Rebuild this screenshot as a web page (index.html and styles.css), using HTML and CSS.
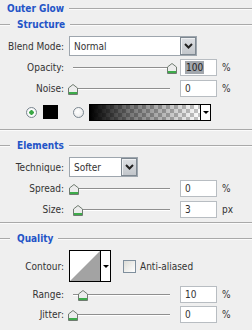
FILE: index.html
```html
<!DOCTYPE html>
<html>
<head>
<meta charset="utf-8">
<link rel="stylesheet" href="styles.css">
</head>
<body>
<div class="panel">
  <div class="title"><span class="hdr">Outer Glow</span><i class="rule"></i></div>

  <section class="group g-structure">
    <div class="legend"><i class="stub"></i><span class="hdr">Structure</span><i class="rule"></i></div>
    <div class="row r-first">
      <span class="lbl">Blend Mode:</span>
      <div class="select sel-blend"><span class="sel-text">Normal</span><span class="sel-btn"><svg width="9" height="6" viewBox="0 0 9 6"><path d="M1 1 L4.5 4.5 L8 1" fill="none" stroke="#222" stroke-width="2"/></svg></span></div>
    </div>
    <div class="row r-next">
      <span class="lbl">Opacity:</span>
      <div class="slider"><i class="track"></i><span class="thumb" style="left:99px"><svg width="10" height="11" viewBox="0 0 10 11"><path d="M0.5 4 L5 0.5 L9.5 4 V10.5 H0.5 Z" fill="#ececec" stroke="#6f7b70"/><rect x="1" y="8" width="8" height="2" fill="#3dab4a"/></svg></span></div>
      <span class="num"><span class="hl">100</span></span><span class="unit">%</span>
    </div>
    <div class="row r-next">
      <span class="lbl">Noise:</span>
      <div class="slider"><i class="track"></i><span class="thumb" style="left:0px"><svg width="10" height="11" viewBox="0 0 10 11"><path d="M0.5 4 L5 0.5 L9.5 4 V10.5 H0.5 Z" fill="#ececec" stroke="#6f7b70"/><rect x="1" y="8" width="8" height="2" fill="#3dab4a"/></svg></span></div>
      <span class="num">0</span><span class="unit">%</span>
    </div>
    <div class="row colors">
      <i class="radio on"></i>
      <i class="swatch"></i>
      <i class="radio"></i>
      <div class="grad"><span class="grad-fill"></span><span class="drop"><i class="tri"></i></span></div>
    </div>
  </section>

  <section class="group g-elements">
    <div class="legend"><i class="stub"></i><span class="hdr">Elements</span><i class="rule"></i></div>
    <div class="row r-first">
      <span class="lbl">Technique:</span>
      <div class="select sel-tech"><span class="sel-text">Softer</span><span class="sel-btn"><svg width="9" height="6" viewBox="0 0 9 6"><path d="M1 1 L4.5 4.5 L8 1" fill="none" stroke="#222" stroke-width="2"/></svg></span></div>
    </div>
    <div class="row r-next">
      <span class="lbl">Spread:</span>
      <div class="slider"><i class="track"></i><span class="thumb" style="left:1px"><svg width="10" height="11" viewBox="0 0 10 11"><path d="M0.5 4 L5 0.5 L9.5 4 V10.5 H0.5 Z" fill="#ececec" stroke="#6f7b70"/><rect x="1" y="8" width="8" height="2" fill="#3dab4a"/></svg></span></div>
      <span class="num">0</span><span class="unit">%</span>
    </div>
    <div class="row r-next">
      <span class="lbl">Size:</span>
      <div class="slider"><i class="track"></i><span class="thumb" style="left:5px"><svg width="10" height="11" viewBox="0 0 10 11"><path d="M0.5 4 L5 0.5 L9.5 4 V10.5 H0.5 Z" fill="#ececec" stroke="#6f7b70"/><rect x="1" y="8" width="8" height="2" fill="#3dab4a"/></svg></span></div>
      <span class="num">3</span><span class="unit">px</span>
    </div>
  </section>

  <section class="group g-quality">
    <div class="legend"><i class="stub"></i><span class="hdr">Quality</span><i class="rule"></i></div>
    <div class="row r-contour">
      <span class="lbl">Contour:</span>
      <div class="contour"><span class="curve"><svg width="30" height="30" viewBox="0 0 30 30"><polygon points="0,30 30,0 30,30" fill="#a3a3a3"/></svg></span><span class="drop"><i class="tri"></i></span></div>
      <i class="check"></i><span class="check-lbl">Anti-aliased</span>
    </div>
    <div class="row r-range">
      <span class="lbl">Range:</span>
      <div class="slider"><i class="track"></i><span class="thumb" style="left:10px"><svg width="10" height="11" viewBox="0 0 10 11"><path d="M0.5 4 L5 0.5 L9.5 4 V10.5 H0.5 Z" fill="#ececec" stroke="#6f7b70"/><rect x="1" y="8" width="8" height="2" fill="#3dab4a"/></svg></span></div>
      <span class="num">10</span><span class="unit">%</span>
    </div>
    <div class="row">
      <span class="lbl">Jitter:</span>
      <div class="slider"><i class="track"></i><span class="thumb" style="left:0px"><svg width="10" height="11" viewBox="0 0 10 11"><path d="M0.5 4 L5 0.5 L9.5 4 V10.5 H0.5 Z" fill="#ececec" stroke="#6f7b70"/><rect x="1" y="8" width="8" height="2" fill="#3dab4a"/></svg></span></div>
      <span class="num">0</span><span class="unit">%</span>
    </div>
  </section>
</div>
</body>
</html>
```

FILE: styles.css
```css
* { box-sizing: border-box; margin: 0; padding: 0; }
html, body { width: 252px; height: 330px; overflow: hidden; }
body {
  background: #efefef;
  font-family: "DejaVu Sans Condensed", "DejaVu Sans", sans-serif;
  font-stretch: condensed;
  font-size: 10px;
  color: #333;
}
i { display: block; font-style: normal; }

.title { display: flex; align-items: center; height: 17px; padding-left: 7px; gap: 5px; }
.hdr { font-weight: bold; color: #2354c7; white-space: nowrap; }
.rule { flex: 1; height: 1px; background: #a9a9a9; box-shadow: 0 1px #fbfbfb; }

.group { border-bottom: 1px solid #a9a9a9; box-shadow: 0 1px #fbfbfb; }
.g-structure { padding-bottom: 7px; }
.g-elements { margin-top: 8px; padding-bottom: 3px; }
.g-quality { margin-top: 8px; border-bottom: 0; box-shadow: none; }

.legend { display: flex; align-items: center; height: 14px; }
.stub { width: 10px; height: 1px; background: #a9a9a9; box-shadow: 0 1px #fbfbfb; margin-right: 7px; }
.legend .rule { margin-left: 5px; }

.row { display: flex; align-items: center; height: 20px; }
.r-first { margin-top: 5px; }
.r-next { margin-top: 1px; }
.lbl { width: 64px; text-align: right; white-space: nowrap; flex: none; }

.select {
  margin-left: 5px; height: 20px; display: flex; align-items: stretch;
  background: #fff; border: 1px solid #9ea6ae;
}
.sel-blend { width: 128px; }
.sel-tech { width: 69px; }
.sel-text { flex: 1; padding-left: 4px; display: flex; align-items: center; }
.sel-btn {
  width: 16px; display: flex; align-items: center; justify-content: center;
  background: linear-gradient(#dde0e4, #c2c6cb);
  border: 1px solid #7e8891; box-shadow: inset 1px 1px #eef0f2;
}

.slider { position: relative; width: 104px; height: 20px; flex: none; margin-left: 4px; }
.track { position: absolute; left: 5px; right: 2px; top: 10px; height: 1px; background: #8f8f8f; box-shadow: 0 1px #fff; }
.thumb { position: absolute; top: 6px; width: 10px; height: 11px; display: block; }
.thumb svg { display: block; }

.num {
  margin-left: 8px; width: 37px; height: 17px; background: #fff;
  border: 1px solid #b8bdc2; padding-left: 4px; display: flex; align-items: center; flex: none;
}
.hl { background: #a2a7ad; color: #222; padding: 1px 1px; }
.unit { margin-left: 5px; }

.colors { margin-top: 4px; padding-left: 26px; }
.radio {
  width: 11px; height: 11px; border-radius: 50%; border: 1px solid #7a8690;
  background: radial-gradient(circle at 40% 40%, #fff 0, #f2f2f2 50%, #d6d9dc 100%);
}
.radio.on { background: radial-gradient(circle, #3aa845 0 2px, #fff 2.5px, #e7e9ea 100%); }
.swatch { width: 15px; height: 14px; background: #000; margin-left: 6px; }
.colors .radio:nth-of-type(3) { margin-left: 15px; }
.grad {
  margin-left: 5px; width: 122px; height: 17px; border: 1px solid #000; display: flex; background: #fff;
}
.grad-fill {
  flex: 1;
  background:
    linear-gradient(to right, #000 0%, rgba(0,0,0,0.55) 35%, rgba(0,0,0,0) 100%),
    repeating-conic-gradient(#c4c4c4 0 25%, #fff 0 50%) 0 0 / 8px 8px;
}
.drop { width: 10px; border-left: 1px solid #000; background: #fff; display: flex; align-items: center; justify-content: center; }
.tri { width: 0; height: 0; border-left: 3px solid transparent; border-right: 3px solid transparent; border-top: 3px solid #000; }

.r-contour { margin-top: 5px; height: 32px; }
.contour { margin-left: 5px; width: 42px; height: 32px; border: 1px solid #000; display: flex; background: #fff; }
.curve { width: 30px; display: block; }
.curve svg { display: block; }
.contour .drop { width: 10px; }
.check {
  margin-left: 12px; width: 13px; height: 13px; border: 1px solid #7f8f9d;
  background: linear-gradient(135deg, #dcdcd6, #fff);
}
.check-lbl { margin-left: 4px; }
.r-range { margin-top: 2px; }
```
